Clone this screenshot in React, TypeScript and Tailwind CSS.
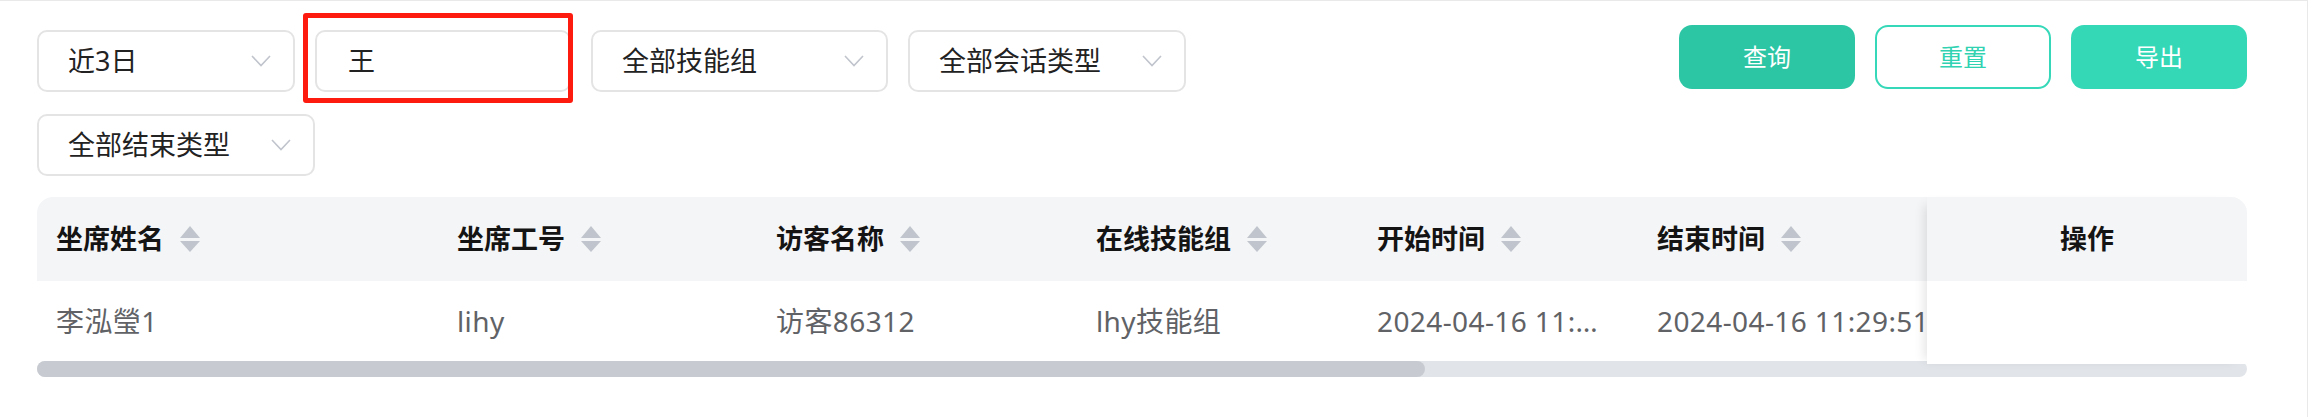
import React from "react";

const Chevron = () => (
  <svg width="20" height="12" viewBox="0 0 20 12" fill="none" className="shrink-0">
    <polyline points="1,1 10,10.5 19,1" stroke="#c0c4cc" strokeWidth="1.6" />
  </svg>
);

const SortIcon = () => (
  <svg width="20" height="27" viewBox="0 0 20 27" className="ml-[16px] shrink-0">
    <path d="M10 0 L20 12 L0 12 Z" fill="#c0c4cc" />
    <path d="M0 15 L20 15 L10 26 Z" fill="#c0c4cc" />
  </svg>
);

const Select = ({ label, w }: { label: string; w: string }) => (
  <div className={`${w} flex h-[62px] items-center justify-between rounded-[10px] border-2 border-[#e4e4e4] bg-white pl-[29px] pr-[22px]`}>
    <span className="text-[27px] text-[#222]">{label}</span>
    <Chevron />
  </div>
);

const columns = [
  { title: "坐席姓名", w: "w-[400px] pl-[19px]", value: "李泓瑩1" },
  { title: "坐席工号", w: "w-[319px] pl-[20px]", value: "lihy" },
  { title: "访客名称", w: "w-[320px] pl-[20px]", value: "访客86312" },
  { title: "在线技能组", w: "w-[281px] pl-[20px]", value: "lhy技能组" },
  { title: "开始时间", w: "w-[280px] pl-[20px] pr-[32px]", value: "2024-04-16 11:29:51" },
  { title: "结束时间", w: "w-[420px] pl-[20px]", value: "2024-04-16 11:29:51" },
];

export default function App() {
  return (
    <div className="h-[417px] w-[2309px] bg-white font-['Noto_Sans','Noto_Sans_CJK_SC',sans-serif]">
      <div className="h-full w-[2308px] border-t border-r border-[#e9e9e9] pl-[37px] pr-[60px] pt-[24px]">
        {/* filters + buttons */}
        <div className="flex items-start justify-between">
          <div className="mt-[5px] flex w-[1200px] flex-wrap gap-x-[20px] gap-y-[22px]">
            <Select label="近3日" w="w-[258px]" />
            <div className="relative w-[256px]">
              <div className="flex h-[62px] items-center rounded-[10px] border-2 border-[#e4e4e4] bg-white pl-[31px]">
                <span className="text-[27px] text-[#222]">王</span>
              </div>
              <div className="absolute -left-[12px] -top-[17px] -right-[2px] -bottom-[11px] rounded-[3px] border-[5px] border-[#fd1a0e]" />
            </div>
            <Select label="全部技能组" w="w-[297px]" />
            <Select label="全部会话类型" w="w-[278px]" />
            <Select label="全部结束类型" w="w-[278px]" />
          </div>
          <div className="flex gap-[20px] text-[24px]">
            <button className="h-[64px] w-[176px] rounded-[13px] bg-[#2cc6a5] text-white">查询</button>
            <button className="h-[64px] w-[176px] rounded-[13px] border-2 border-[#35d8b8] bg-white text-[#30d2b2]">重置</button>
            <button className="h-[64px] w-[176px] rounded-[13px] bg-[#34d8b7] text-white">导出</button>
          </div>
        </div>

        {/* table */}
        <div className="relative mt-[21px]">
          <div className="overflow-hidden rounded-t-[16px]">
            <div className="flex h-[84px] bg-[#f4f5f7]">
              {columns.map((c) => (
                <div key={c.title} className={`${c.w} flex shrink-0 items-center`}>
                  <span className="text-[27px] font-bold text-[#141414]">{c.title}</span>
                  <SortIcon />
                </div>
              ))}
            </div>
            <div className="flex h-[80px] bg-white">
              {columns.map((c) => (
                <div key={c.title} className={`${c.w} flex shrink-0 items-center overflow-hidden`}>
                  <span className="block truncate whitespace-nowrap text-[28px] tracking-[0.4px] text-[#606266]">{c.value}</span>
                </div>
              ))}
            </div>
          </div>
          <div className="h-[16px] rounded-full bg-[#e1e4e8]">
            <div className="h-full w-[1388px] rounded-full bg-[#c7cbd1]" />
          </div>

          {/* fixed right column */}
          <div className="absolute right-0 top-0 h-[167px] w-[320px] rounded-tr-[16px] bg-white shadow-[-8px_2px_12px_-6px_rgba(0,0,0,0.12)]">
            <div className="flex h-[84px] items-center justify-center rounded-tr-[16px] bg-[#f4f5f7]">
              <span className="text-[27px] font-bold text-[#141414]">操作</span>
            </div>
          </div>
        </div>
      </div>
    </div>
  );
}
